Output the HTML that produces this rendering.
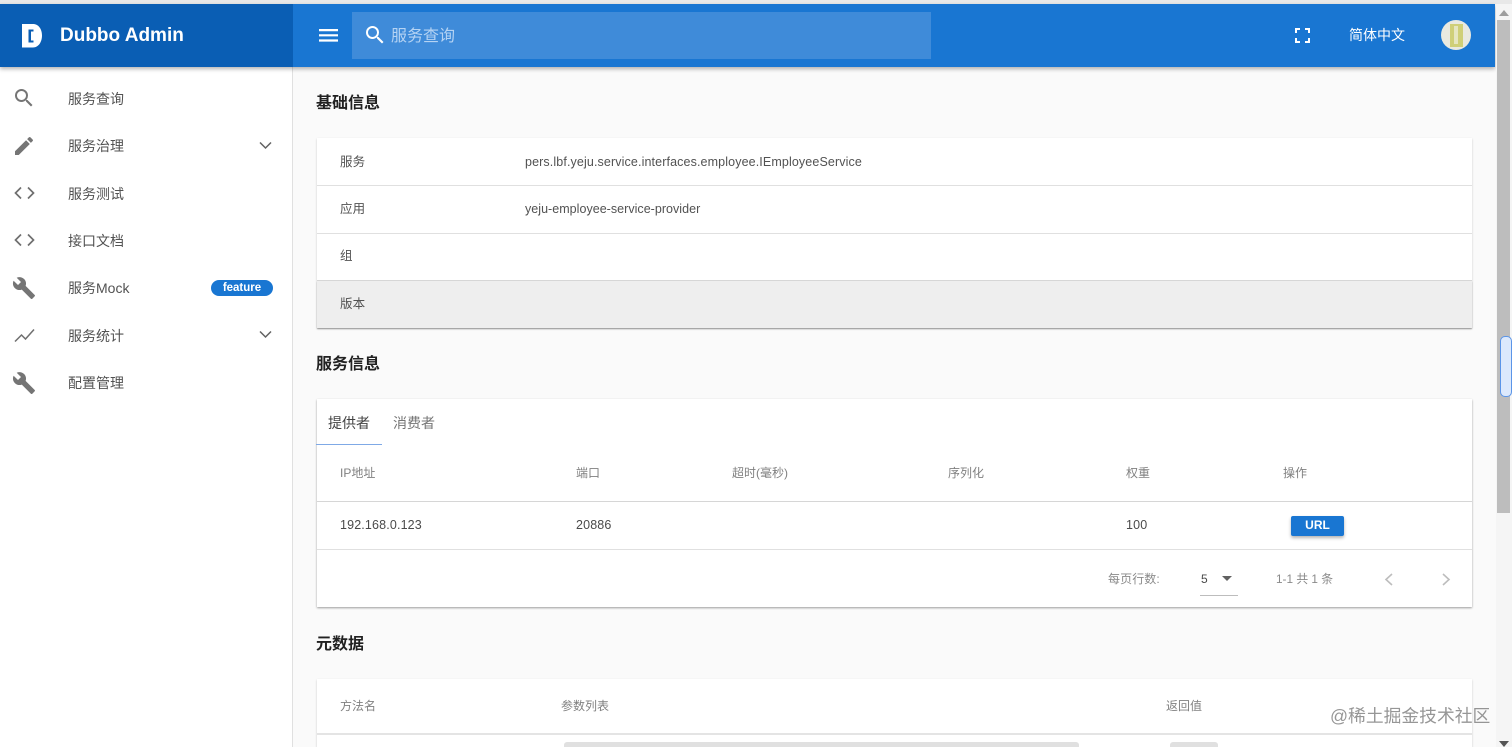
<!DOCTYPE html>
<html lang="zh"><head><meta charset="utf-8"><title>Dubbo Admin</title>
<style>
html,body{margin:0;padding:0;width:1512px;height:747px;overflow:hidden;background:#fafafa;}
body{position:relative;font-family:"Liberation Sans","Noto Sans CJK SC",sans-serif;color:#424242;font-size:13px;}
.a{position:absolute;}
.t{position:absolute;white-space:nowrap;line-height:20px;}
svg{position:absolute;overflow:visible;}
.nav{font-size:14px;color:#525252;left:68px;}
.h{font-size:16px;font-weight:700;color:#212121;left:316px;}
.k{font-size:12.5px;color:#525252;left:340px;letter-spacing:.08px;}
.th{font-size:12px;color:#808080;}
.td{font-size:12.5px;color:#4a4a4a;letter-spacing:.15px;}
.card{position:absolute;left:316.500px;width:1155.500px;background:#fff;box-shadow:0 1px 2px rgba(0,0,0,.2);}
.ln{position:absolute;left:317px;width:1155px;height:1px;background:#e0e0e0;}
</style></head><body>
<div class="a" style="left:0;top:0;width:1512px;height:4px;background:#e8e8e8"></div>
<div class="a" style="left:0;top:67px;width:292px;height:680px;background:#fff;border-right:1px solid #e0e0e0;box-sizing:content-box"></div>

<!-- cards -->
<div class="card" style="top:138px;height:190px"></div>
<div class="a" style="left:317px;top:281px;width:1155px;height:47px;background:#eee;box-shadow:0 1px 1px rgba(0,0,0,.28)"></div>
<div class="ln" style="top:185px"></div><div class="ln" style="top:233px"></div><div class="ln" style="top:280px;background:#d6d6d6"></div>
<div class="t h" style="top:94px">基础信息</div>
<div class="t k" style="top:152px">服务</div>
<div class="t k" style="top:152px;left:525px;letter-spacing:.12px">pers.lbf.yeju.service.interfaces.employee.IEmployeeService</div>
<div class="t k" style="top:199px">应用</div>
<div class="t k" style="top:199px;left:525px;letter-spacing:.03px">yeju-employee-service-provider</div>
<div class="t k" style="top:246px">组</div>
<div class="t k" style="top:294px">版本</div>

<div class="t h" style="top:355px">服务信息</div>
<div class="card" style="top:399px;height:208px;box-shadow:0 1px 2px rgba(0,0,0,.38)"></div>
<div class="t" style="left:328px;top:413px;font-size:14px;color:#424242">提供者</div>
<div class="t" style="left:393px;top:413px;font-size:14px;color:#757575">消费者</div>
<div class="a" style="left:316px;top:444px;width:66px;height:1px;background:#7fa9e6"></div>
<div class="t th" style="left:340px;top:463px">IP地址</div>
<div class="t th" style="left:576px;top:463px">端口</div>
<div class="t th" style="left:732px;top:463px">超时(毫秒)</div>
<div class="t th" style="left:948px;top:463px">序列化</div>
<div class="t th" style="left:1126px;top:463px">权重</div>
<div class="t th" style="left:1283px;top:463px">操作</div>
<div class="ln" style="top:501px;background:#d6d6d6"></div>
<div class="t td" style="left:340px;top:515px">192.168.0.123</div>
<div class="t td" style="left:576px;top:515px">20886</div>
<div class="t td" style="left:1126px;top:515px">100</div>
<div class="a" style="left:1291px;top:516px;width:53px;height:20px;background:#1976d2;border-radius:2px;box-shadow:0 2px 3px rgba(0,0,0,.3);color:#fff;font-size:12px;font-weight:700;text-align:center;line-height:19px">URL</div>
<div class="ln" style="top:549px"></div>
<div class="t th" style="left:1108px;top:569px;color:#8a8a8a;letter-spacing:.1px">每页行数:</div>
<div class="t td" style="left:1201px;top:569px;font-size:12px">5</div>
<svg style="left:1222px;top:576px" width="10" height="5"><path d="M0 0h10L5 5z" fill="#616161"/></svg>
<div class="a" style="left:1200px;top:595px;width:38px;height:1px;background:#bdbdbd"></div>
<div class="t th" style="left:1276px;top:569px;color:#8a8a8a;font-size:11.800px">1-1 共 1 条</div>
<svg style="left:1384px;top:573px" width="10" height="13" fill="none" stroke="#bdbdbd" stroke-width="1.6"><path d="M8 1L2 6.500 8 12"/></svg>
<svg style="left:1441px;top:573px" width="10" height="13" fill="none" stroke="#bdbdbd" stroke-width="1.6"><path d="M2 1l6 5.500L2 12"/></svg>

<div class="t h" style="top:635px">元数据</div>
<div class="card" style="top:679px;height:68px"></div>
<div class="t th" style="left:340px;top:696px">方法名</div>
<div class="t th" style="left:561px;top:696px">参数列表</div>
<div class="t th" style="left:1166px;top:696px">返回值</div>
<div class="ln" style="top:733px;height:2px;background:#e4e4e4"></div>
<div class="a" style="left:564px;top:742px;width:515px;height:5px;background:#e0e0e0;border-radius:3px 3px 0 0"></div>
<div class="a" style="left:1170px;top:742px;width:48px;height:5px;background:#e0e0e0;border-radius:3px 3px 0 0"></div>

<!-- sidebar -->
<svg style="left:12px;top:86px" width="24" height="24" viewBox="0 0 24 24" fill="#757575"><path d="M15.500 14h-.79l-.28-.27A6.470 6.470 0 0 0 16 9.500 6.500 6.500 0 1 0 9.500 16c1.610 0 3.090-.59 4.230-1.570l.27.28v.79l5 4.990L20.490 19l-4.990-5zm-6 0C7.010 14 5 11.990 5 9.500S7.010 5 9.500 5 14 7.010 14 9.500 11.990 14 9.500 14z"/></svg>
<svg style="left:12px;top:134px" width="24" height="24" viewBox="0 0 24 24" fill="#757575"><path d="M3 17.250V21h3.750L17.810 9.940l-3.750-3.750L3 17.250zM20.710 7.040a1 1 0 0 0 0-1.410l-2.340-2.340a1 1 0 0 0-1.410 0l-1.830 1.830 3.750 3.750 1.830-1.830z"/></svg>
<svg style="left:13px;top:185px" width="24" height="16" fill="none" stroke="#6f6f6f" stroke-width="1.700"><path d="M8 2.500L2.500 8 8 13.500M15 2.500L20.500 8 15 13.500"/></svg>
<svg style="left:13px;top:232px" width="24" height="16" fill="none" stroke="#6f6f6f" stroke-width="1.700"><path d="M8 2.500L2.500 8 8 13.500M15 2.500L20.500 8 15 13.500"/></svg>
<svg style="left:12px;top:276px" width="24" height="24" viewBox="0 0 24 24" fill="#757575"><path d="M22.700 19l-9.100-9.100c.9-2.300.4-5-1.500-6.900-2-2-5-2.400-7.400-1.300L9 6 6 9 1.600 4.700C.4 7.100.9 10.100 2.900 12.100c1.900 1.900 4.600 2.400 6.900 1.500l9.100 9.100c.4.400 1 .4 1.400 0l2.300-2.300c.5-.4.500-1.100.1-1.400z"/></svg>
<svg style="left:14px;top:327px" width="22" height="16" fill="none" stroke="#6f6f6f" stroke-width="1.500"><path d="M1 14.500L7.500 8l4 4L20 2.500"/></svg>
<svg style="left:12px;top:371px" width="24" height="24" viewBox="0 0 24 24" fill="#757575"><path d="M22.700 19l-9.100-9.100c.9-2.300.4-5-1.500-6.900-2-2-5-2.400-7.400-1.300L9 6 6 9 1.600 4.700C.4 7.100.9 10.100 2.900 12.100c1.900 1.900 4.600 2.400 6.900 1.500l9.100 9.100c.4.400 1 .4 1.400 0l2.300-2.300c.5-.4.500-1.100.1-1.400z"/></svg>
<div class="t nav" style="top:89px">服务查询</div>
<div class="t nav" style="top:136px">服务治理</div>
<div class="t nav" style="top:184px">服务测试</div>
<div class="t nav" style="top:231px">接口文档</div>
<div class="t nav" style="top:278px">服务Mock</div>
<div class="t nav" style="top:326px">服务统计</div>
<div class="t nav" style="top:373px">配置管理</div>
<svg style="left:259px;top:141px" width="13" height="9" fill="none" stroke="#616161" stroke-width="1.500"><path d="M1 1.500l5.500 5.500L12 1.500"/></svg>
<svg style="left:259px;top:330px" width="13" height="9" fill="none" stroke="#616161" stroke-width="1.500"><path d="M1 1.500l5.500 5.500L12 1.500"/></svg>
<div class="a" style="left:211px;top:280px;width:62px;height:16px;border-radius:8px;background:#1976d2;color:#fff;font-size:11.500px;font-weight:700;text-align:center;line-height:16px">feature</div>

<!-- toolbar -->
<div class="a" style="left:0;top:4px;width:1495px;height:63px;background:#1976d2;box-shadow:0 2px 4px rgba(0,0,0,.3)"></div>
<div class="a" style="left:0;top:4px;width:293px;height:63px;background:#0a5eb4"></div>
<svg style="left:22px;top:24px" width="21" height="24" viewBox="0 0 21 24"><path fill-rule="evenodd" d="M0 0h11c5.500 0 9 5 9 11.500S16.500 23.500 11 23.500H0zM6.500 5.500v13h5v-2H9V7.500h2.500v-2z" fill="#fff"/></svg>
<div class="t" style="left:60px;top:25px;font-size:19px;font-weight:700;color:#fff;line-height:22px">Dubbo Admin</div>
<svg style="left:316px;top:23px" width="25" height="25" viewBox="0 0 25 25" fill="#fff"><path d="M3 6h19v2.200H3zM3 11.200h19v2.200H3zM3 16.400h19v2.200H3z"/></svg>
<div class="a" style="left:352px;top:12px;width:579px;height:47px;background:#3f8bd9"></div>
<svg style="left:363px;top:23px" width="24" height="24" viewBox="0 0 24 24" fill="#fff"><path d="M15.500 14h-.79l-.28-.27A6.470 6.470 0 0 0 16 9.500 6.500 6.500 0 1 0 9.500 16c1.610 0 3.090-.59 4.230-1.570l.27.28v.79l5 4.990L20.490 19l-4.990-5zm-6 0C7.010 14 5 11.990 5 9.500S7.010 5 9.500 5 14 7.010 14 9.500 11.990 14 9.500 14z"/></svg>
<div class="t" style="left:391px;top:27px;font-size:16px;color:#b5d3f3">服务查询</div>
<svg style="left:1295px;top:28px" width="15" height="15" fill="none" stroke="#fff" stroke-width="2"><path d="M1 5V1h4M10 1h4v4M14 10v4h-4M5 14H1v-4"/></svg>
<div class="t" style="left:1349px;top:25px;font-size:14px;color:#fff">简体中文</div>
<div class="a" style="left:1441px;top:20px;width:30px;height:30px;border-radius:50%;background:#e9e9e0"></div>
<div class="a" style="left:1450px;top:24px;width:13px;height:23px;background:#cfcf78"></div>
<div class="a" style="left:1454px;top:26px;width:4px;height:18px;background:#e6e6c0"></div>

<!-- scrollbar -->
<div class="a" style="left:1496px;top:4px;width:16px;height:743px;background:#f5f5f5"></div>
<svg style="left:1499px;top:10px" width="10" height="6"><path d="M0 6L5 0l5 6z" fill="#9e9e9e"/></svg>
<div class="a" style="left:1497px;top:20px;width:13px;height:493px;background:#bdbdbd"></div>
<div class="a" style="left:1500px;top:336px;width:12px;height:61px;box-sizing:border-box;background:#dce9fc;border:1px solid #5b95e8;border-radius:5px"></div>
<svg style="left:1499px;top:741px" width="10" height="6"><path d="M0 0l5 6 5-6z" fill="#555"/></svg>

<div class="t" style="left:1330px;top:704px;font-size:17.800px;color:rgba(110,110,110,.72);line-height:24px">@稀土掘金技术社区</div>
</body></html>
